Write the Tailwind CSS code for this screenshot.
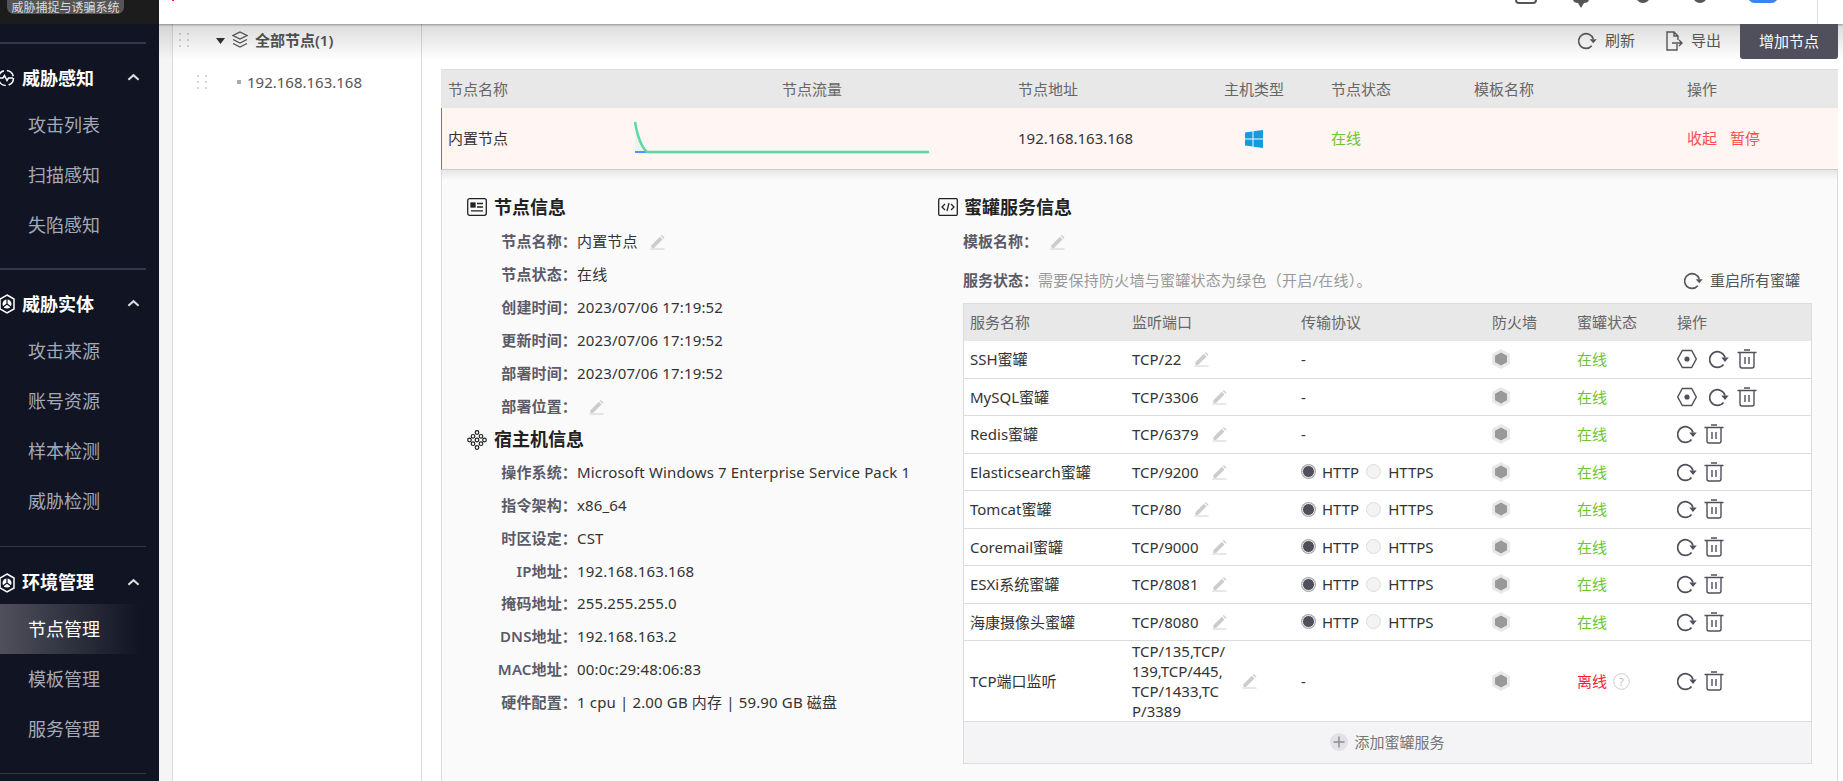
<!doctype html>
<html>
<head>
  <meta charset="UTF-8">
  <script src="https://cdn.jsdelivr.net/npm/@tailwindcss/browser@4"></script>
</head>
<body class="overflow-hidden font-['Noto_Sans','Noto_Sans_CJK_SC',sans-serif] text-[15px] text-[#333]">

<!-- shared icons -->
<svg class="hidden">
  <symbol id="i-refresh" viewBox="0 0 20 20"><path d="M14.5 15.500A7.800 7.800 0 1 1 16 8.500" fill="none" stroke="currentColor" stroke-width="1.700"/><path d="M12.300 8.600h7.400L16 13z" fill="currentColor"/></symbol>
  <symbol id="i-trash" viewBox="0 0 20 20"><path d="M7 1h6M0.5 3.500h19M3 4v13a2 2 0 0 0 2 2h10a2 2 0 0 0 2-2V4M8 8v7M12 8v7" fill="none" stroke="currentColor" stroke-width="1.400"/></symbol>
  <symbol id="i-target" viewBox="0 0 20 20"><path d="M5.300 1.500h9.400L19.300 10l-4.600 8.500H5.300L.7 10z" fill="none" stroke="currentColor" stroke-width="1.500" stroke-linejoin="round"/><circle cx="10" cy="10" r="2.600" fill="currentColor"/></symbol>
  <symbol id="i-pencil" viewBox="0 0 16 16"><path d="M1.500 11.500 10.500 2.500l2.800 2.800-9 9H1.500z" fill="currentColor"/><path d="M11.500 1.500l1-1 3 3-1 1z" fill="currentColor"/><path d="M0.500 15.500h15" stroke="currentColor" stroke-width="1"/></symbol>
  <symbol id="i-hex" viewBox="0 0 18 20"><path d="M9 0l9 5v10l-9 5-9-5V5z" fill="#e8e8e8"/><path d="M9 3.500l6 3.300v6.400l-6 3.300-6-3.300V6.800z" fill="#999"/></symbol>
  <symbol id="i-up" viewBox="0 0 14 9"><path d="M1.500 7 7 2l5.500 5" fill="none" stroke="currentColor" stroke-width="2.200"/></symbol>
  <symbol id="i-dots" viewBox="0 0 10 14"><g fill="#d8d8d8"><rect x="0" y="0" width="2" height="2"/><rect x="8" y="0" width="2" height="2"/><rect x="0" y="6" width="2" height="2"/><rect x="8" y="6" width="2" height="2"/><rect x="0" y="12" width="2" height="2"/><rect x="8" y="12" width="2" height="2"/></g></symbol>
  <symbol id="i-shield" viewBox="0 0 16 20"><path d="M8 1l7 4v10l-7 4-7-4V5z" fill="none" stroke="#fff" stroke-width="1.500"/><circle cx="8" cy="10" r="4.500" fill="#fff"/><path d="M8 10V5M8 10l-4 3M8 10l4 3" stroke="#111423" stroke-width="1.200"/></symbol>
</svg>

<div class="flex h-[781px] w-[1843px]">

  <!-- Sidebar -->
  <aside class="w-[159px] shrink-0 bg-[#111423] overflow-hidden">
    <div class="h-6 bg-[#1c1c1c] pl-[7px]">
      <div class="w-[117px] h-[14px] pt-[2px] rounded-b-[7px] bg-[#555] text-[#ddd] text-[12px] leading-[11px] text-center whitespace-nowrap">威胁捕捉与诱骗系统</div>
    </div>

    <div class="mt-[18px] w-[146px] h-[2px] bg-[#34364a]"></div>
    <div class="mt-3 h-11 flex items-center relative text-white font-bold text-[18px] pl-[22px]">
      <svg class="absolute left-[-1px] top-3 w-4 h-5" viewBox="0 0 16 20"><circle cx="7" cy="10" r="7.500" fill="none" stroke="#fff" stroke-width="1.500" stroke-dasharray="9 3"/><path d="M1 10h3l1.500-2.500L8 12.500 9.500 10H14" fill="none" stroke="#fff" stroke-width="1.500"/></svg>
      威胁感知
      <svg class="absolute left-[127px] top-[17px] w-[13px] h-[9px] text-[#ddd]"><use href="#i-up"/></svg>
    </div>
    <div class="text-[18px] text-[#a4a9b8] pl-[28px] leading-[50px]">
      <div>攻击列表</div>
      <div>扫描感知</div>
      <div>失陷感知</div>
    </div>

    <div class="mt-[18px] w-[146px] h-[2px] bg-[#34364a]"></div>
    <div class="mt-3 h-11 flex items-center relative text-white font-bold text-[18px] pl-[22px]">
      <svg class="absolute left-[-1px] top-3 w-4 h-5"><use href="#i-shield"/></svg>
      威胁实体
      <svg class="absolute left-[127px] top-[17px] w-[13px] h-[9px] text-[#ddd]"><use href="#i-up"/></svg>
    </div>
    <div class="text-[18px] text-[#a4a9b8] pl-[28px] leading-[50px]">
      <div>攻击来源</div>
      <div>账号资源</div>
      <div>样本检测</div>
      <div>威胁检测</div>
    </div>

    <div class="mt-5 w-[146px] h-px bg-[#34364a]"></div>
    <div class="mt-[14px] h-[43px] flex items-center relative text-white font-bold text-[18px] pl-[22px]">
      <svg class="absolute left-[-1px] top-3 w-4 h-5"><use href="#i-shield"/></svg>
      环境管理
      <svg class="absolute left-[127px] top-[17px] w-[13px] h-[9px] text-[#ddd]"><use href="#i-up"/></svg>
    </div>
    <div class="text-[18px] text-[#a4a9b8] leading-[50px]">
      <div class="pl-[28px] text-white bg-linear-to-r from-[#50505c] to-transparent w-[140px]">节点管理</div>
      <div class="pl-[28px]">模板管理</div>
      <div class="pl-[28px]">服务管理</div>
    </div>
    <div class="mt-[19px] w-[146px] h-px bg-[#34364a]"></div>
  </aside>

  <div class="flex-1 flex flex-col relative">
    <!-- Top bar, only its lower edge is in view -->
    <header class="h-6 shrink-0 bg-white relative z-20 shadow-[0_1px_2px_rgba(0,0,0,0.35)] overflow-hidden">
      <div class="absolute left-[13px] top-0 w-[2px] h-px bg-[#f5222d]"></div>
      <div class="absolute left-[1356px] top-[-14px] w-[22px] h-[18px] rounded-[4px] border-2 border-[#555]"></div>
      <svg class="absolute left-[1414px] top-0 w-4 h-2" viewBox="0 0 16 8"><path d="M0 0h16q-1 3-5 3L8 8 5 3Q1 3 0 0z" fill="#555"/></svg>
      <div class="absolute left-[1477px] top-[-6px] w-[14px] h-[9px] bg-[#555] rounded-b-full"></div>
      <div class="absolute left-[1534px] top-[-6px] w-[14px] h-[9px] bg-[#555] rounded-b-full"></div>
      <div class="absolute left-[1589px] top-[-10px] w-[30px] h-[13px] bg-[#3b82f6] rounded-full"></div>
      <div class="absolute left-[1658px] top-0 w-px h-6 bg-[#ddd]"></div>
    </header>
    <div class="absolute left-0 right-0 top-6 h-9 z-10 bg-linear-to-b from-[#00000024] to-transparent pointer-events-none"></div>

    <div class="flex-1 flex min-h-0">
      <div class="w-[13px] shrink-0 bg-[#f5f5f5]"></div>

      <!-- Node tree -->
      <div class="w-[250px] shrink-0 bg-white border-x border-[#dcdcdc] text-[#555]">
        <div class="h-[32px] flex items-center relative">
          <svg class="absolute left-[6px] top-[9px] w-[10px] h-[14px]"><use href="#i-dots"/></svg>
          <svg class="absolute left-[43px] top-[14px] w-[9px] h-[6px]" viewBox="0 0 9 6"><path d="M0 0h9L4.500 6z" fill="#333"/></svg>
          <svg class="absolute left-[59px] top-[7px] w-[16px] h-[18px]" viewBox="0 0 16 18" fill="none" stroke="#555" stroke-width="1.300"><path d="M8 1l7 3.500-7 3.500-7-3.500z"/><path d="M1 8.500l7 3.500 7-3.500"/><path d="M1 12.500l7 3.500 7-3.500"/></svg>
          <span class="ml-[82px] font-semibold">全部节点(1)</span>
        </div>
        <div class="h-[52px] flex items-center relative">
          <svg class="absolute left-[24px] top-[19px] w-[10px] h-[14px]"><use href="#i-dots"/></svg>
          <div class="absolute left-[64px] top-[24px] w-1 h-1 bg-[#aaa]"></div>
          <span class="ml-[74px]">192.168.163.168</span>
        </div>
      </div>

      <!-- Main content -->
      <main class="flex-1 min-w-0 bg-white">
        <div class="h-[45px] flex justify-end items-start pr-[5px] relative z-20">
          <div class="flex items-center h-[33px] mr-[31px] text-[#555] gap-[8px]">
            <svg class="w-[19px] h-[19px] text-[#555]"><use href="#i-refresh"/></svg>刷新
          </div>
          <div class="flex items-center h-[33px] mr-[19px] text-[#555] gap-[8px]">
            <svg class="w-[17px] h-[20px]" viewBox="0 0 17 20" fill="none" stroke="#555" stroke-width="1.400"><path d="M11 13V19H1V1h7l4 4v4M8 1v4h4M6 12h10M13 9l3 3-3 3"/></svg>导出
          </div>
          <button class="w-[98px] h-[35px] rounded-b-[3px] bg-[#50505c] text-white text-[15px]">增加节点</button>
        </div>

        <div class="ml-[19px] w-[1397px]">
          <div class="h-[39px] bg-[#e8e8e8] border-t border-[#dcdcdc] text-[#666] grid grid-cols-[334px_236px_206px_107px_143px_213px_1fr] items-center pl-[7px]">
            <div>节点名称</div><div>节点流量</div><div>节点地址</div><div>主机类型</div><div>节点状态</div><div>模板名称</div><div>操作</div>
          </div>
          <div class="h-[62px] bg-[#fff5f3] border-l border-b border-l-[#e5484d] border-b-[#ccc] grid grid-cols-[334px_236px_206px_107px_143px_213px_1fr] items-center pl-[6px] relative">
            <div>内置节点</div>
            <svg class="absolute left-[192px] top-[13px]" width="298" height="34" viewBox="0 0 298 34"><path d="M1 1Q5 24 13 31L296 31V33H1z" fill="#eef3ee"/><path d="M1 31H13" stroke="#5b8ff9" stroke-width="2"/><path d="M1 1Q5 24 13 31H295" fill="none" stroke="#5ad8a6" stroke-width="2.500"/></svg>
            <div></div>
            <div>192.168.163.168</div>
            <div class="pl-[21px]">
              <svg class="w-[18px] h-[18px]" viewBox="0 0 18 18" fill="#0f9ce0"><path d="M0 2.500 7.500 1.400V8.500H0zM8.500 1.300 18 0V8.500H8.500zM0 9.500H7.500V16.600L0 15.500zM8.500 9.500H18V18L8.500 16.700z"/></svg>
            </div>
            <div class="text-[#6cc62f]">在线</div>
            <div></div>
            <div class="text-[#ff4d4f] flex gap-[13px]"><span>收起</span><span>暂停</span></div>
          </div>
        </div>

        <!-- Expanded detail -->
        <div class="ml-[19px] w-[1397px] h-[612px] bg-[#fafafa] border-x border-[#dcdcdc] flex pl-[25px] pt-[25px] relative">
          <div class="absolute left-0 right-0 top-0 h-[10px] bg-linear-to-b from-[#00000014] to-transparent"></div>

          <div class="w-[471px] shrink-0">
            <div class="h-6 flex items-center gap-[7px] text-[18px] font-bold text-[#222]">
              <svg class="w-5 h-[18px]" viewBox="0 0 20 18" fill="none" stroke="#222" stroke-width="1.300"><rect x=".7" y=".7" width="18.600" height="16.600" rx="2"/><rect x="4" y="5" width="4" height="4" fill="#222"/><path d="M10 5.500h6M10 9h6M4 12.800h12"/></svg>
              节点信息
            </div>
            <div class="mt-[6px] tracking-[0.15px] [&>div]:h-[33px] [&>div]:flex [&>div]:items-center">
              <div><span class="w-[110px] text-right font-semibold text-[#5a5a68]">节点名称：</span>内置节点<svg class="ml-[12px] w-[15px] h-[16px] text-[#ccc]"><use href="#i-pencil"/></svg></div>
              <div><span class="w-[110px] text-right font-semibold text-[#5a5a68]">节点状态：</span>在线</div>
              <div><span class="w-[110px] text-right font-semibold text-[#5a5a68]">创建时间：</span>2023/07/06 17:19:52</div>
              <div><span class="w-[110px] text-right font-semibold text-[#5a5a68]">更新时间：</span>2023/07/06 17:19:52</div>
              <div><span class="w-[110px] text-right font-semibold text-[#5a5a68]">部署时间：</span>2023/07/06 17:19:52</div>
              <div><span class="w-[110px] text-right font-semibold text-[#5a5a68]">部署位置：</span><svg class="ml-[12px] w-[15px] h-[16px] text-[#ccc]"><use href="#i-pencil"/></svg></div>
            </div>
            <div class="mt-[4.500px] h-6 flex items-center gap-[7px] text-[18px] font-bold text-[#222]">
              <svg class="w-5 h-5" viewBox="0 0 20 20" fill="none" stroke="#222" stroke-width="1.200"><circle cx="10" cy="2.500" r="1.800"/><circle cx="6" cy="6.300" r="1.800"/><circle cx="14" cy="6.300" r="1.800"/><circle cx="2.500" cy="10" r="1.800"/><circle cx="10" cy="10" r="1.800"/><circle cx="17.500" cy="10" r="1.800"/><circle cx="6" cy="13.700" r="1.800"/><circle cx="14" cy="13.700" r="1.800"/><circle cx="10" cy="17.500" r="1.800"/></svg>
              宿主机信息
            </div>
            <div class="mt-[4.500px] tracking-[0.15px] [&>div]:h-[32.8px] [&>div]:flex [&>div]:items-center">
              <div><span class="w-[110px] text-right font-semibold text-[#5a5a68]">操作系统：</span>Microsoft Windows 7 Enterprise Service Pack 1</div>
              <div><span class="w-[110px] text-right font-semibold text-[#5a5a68]">指令架构：</span>x86_64</div>
              <div><span class="w-[110px] text-right font-semibold text-[#5a5a68]">时区设定：</span>CST</div>
              <div><span class="w-[110px] text-right font-semibold text-[#5a5a68]">IP地址：</span>192.168.163.168</div>
              <div><span class="w-[110px] text-right font-semibold text-[#5a5a68]">掩码地址：</span>255.255.255.0</div>
              <div><span class="w-[110px] text-right font-semibold text-[#5a5a68]">DNS地址：</span>192.168.163.2</div>
              <div><span class="w-[110px] text-right font-semibold text-[#5a5a68]">MAC地址：</span>00:0c:29:48:06:83</div>
              <div><span class="w-[110px] text-right font-semibold text-[#5a5a68]">硬件配置：</span>1 cpu | 2.00 GB 内存 | 59.90 GB 磁盘</div>
            </div>
          </div>

          <div class="w-[874px] shrink-0">
            <div class="h-6 flex items-center gap-[6px] text-[18px] font-bold text-[#222]">
              <svg class="w-5 h-[18px]" viewBox="0 0 20 18" fill="none" stroke="#222" stroke-width="1.300"><rect x=".7" y=".7" width="18.600" height="16.600" rx="1"/><path d="M7 6 4 9l3 3M13 6l3 3-3 3M11 5 9 13"/></svg>
              蜜罐服务信息
            </div>
            <div class="pl-[25px]">
              <div class="h-[33px] mt-[6px] flex items-center">
                <span class="font-semibold text-[#5a5a68]">模板名称：</span>
                <svg class="ml-[12px] w-[15px] h-[16px] text-[#ccc]"><use href="#i-pencil"/></svg>
              </div>
              <div class="h-[45px] flex items-center">
                <span class="font-semibold text-[#5a5a68]">服务状态：</span>
                <span class="text-[#999] tracking-[0.25px]">需要保持防火墙与蜜罐状态为绿色（开启/在线）。</span>
                <span class="ml-auto mr-[12px] flex items-center gap-[7px] text-[#555]"><svg class="w-[19px] h-[19px]"><use href="#i-refresh"/></svg>重启所有蜜罐</span>
              </div>

              <div class="w-[849px] border border-[#dcdcdc]">
                <div class="h-[37px] bg-[#e8e8e8] text-[#666] grid grid-cols-[162px_169px_191px_85px_100px_1fr] items-center pl-[6px]">
                  <div>服务名称</div><div>监听端口</div><div>传输协议</div><div>防火墙</div><div>蜜罐状态</div><div>操作</div>
                </div>

                <div class="h-[37.5px] bg-white border-b border-[#dcdcdc] grid grid-cols-[162px_169px_191px_85px_100px_1fr] items-center pl-[6px]">
                  <div>SSH蜜罐</div>
                  <div class="flex items-center gap-[13px]">TCP/22<svg class="w-[15px] h-[16px] text-[#ccc]"><use href="#i-pencil"/></svg></div>
                  <div>-</div>
                  <svg class="w-[18px] h-5"><use href="#i-hex"/></svg>
                  <div class="text-[#6cc62f]">在线</div>
                  <div class="flex items-center text-[#50505c]"><svg class="w-5 h-5"><use href="#i-target"/></svg><svg class="ml-[12px] w-5 h-5"><use href="#i-refresh"/></svg><svg class="ml-[8px] w-5 h-5"><use href="#i-trash"/></svg></div>
                </div>
                <div class="h-[37.5px] bg-white border-b border-[#dcdcdc] grid grid-cols-[162px_169px_191px_85px_100px_1fr] items-center pl-[6px]">
                  <div>MySQL蜜罐</div>
                  <div class="flex items-center gap-[13px]">TCP/3306<svg class="w-[15px] h-[16px] text-[#ccc]"><use href="#i-pencil"/></svg></div>
                  <div>-</div>
                  <svg class="w-[18px] h-5"><use href="#i-hex"/></svg>
                  <div class="text-[#6cc62f]">在线</div>
                  <div class="flex items-center text-[#50505c]"><svg class="w-5 h-5"><use href="#i-target"/></svg><svg class="ml-[12px] w-5 h-5"><use href="#i-refresh"/></svg><svg class="ml-[8px] w-5 h-5"><use href="#i-trash"/></svg></div>
                </div>
                <div class="h-[37.5px] bg-white border-b border-[#dcdcdc] grid grid-cols-[162px_169px_191px_85px_100px_1fr] items-center pl-[6px]">
                  <div>Redis蜜罐</div>
                  <div class="flex items-center gap-[13px]">TCP/6379<svg class="w-[15px] h-[16px] text-[#ccc]"><use href="#i-pencil"/></svg></div>
                  <div>-</div>
                  <svg class="w-[18px] h-5"><use href="#i-hex"/></svg>
                  <div class="text-[#6cc62f]">在线</div>
                  <div class="flex items-center text-[#50505c]"><svg class="w-5 h-5"><use href="#i-refresh"/></svg><svg class="ml-[7px] w-5 h-5"><use href="#i-trash"/></svg></div>
                </div>
                <div class="h-[37.5px] bg-white border-b border-[#dcdcdc] grid grid-cols-[162px_169px_191px_85px_100px_1fr] items-center pl-[6px]">
                  <div>Elasticsearch蜜罐</div>
                  <div class="flex items-center gap-[13px]">TCP/9200<svg class="w-[15px] h-[16px] text-[#ccc]"><use href="#i-pencil"/></svg></div>
                  <div class="flex items-center"><span class="w-[13px] h-[13px] ml-px rounded-full border-[1.500px] border-[#eee] bg-[#50505c] ring-1 ring-[#aaa]"></span><span class="ml-[7px]">HTTP</span><span class="ml-[7px] w-[15px] h-[15px] rounded-full border border-[#ddd] bg-[#f3f3f3]"></span><span class="ml-[7px]">HTTPS</span></div>
                  <svg class="w-[18px] h-5"><use href="#i-hex"/></svg>
                  <div class="text-[#6cc62f]">在线</div>
                  <div class="flex items-center text-[#50505c]"><svg class="w-5 h-5"><use href="#i-refresh"/></svg><svg class="ml-[7px] w-5 h-5"><use href="#i-trash"/></svg></div>
                </div>
                <div class="h-[37.5px] bg-white border-b border-[#dcdcdc] grid grid-cols-[162px_169px_191px_85px_100px_1fr] items-center pl-[6px]">
                  <div>Tomcat蜜罐</div>
                  <div class="flex items-center gap-[13px]">TCP/80<svg class="w-[15px] h-[16px] text-[#ccc]"><use href="#i-pencil"/></svg></div>
                  <div class="flex items-center"><span class="w-[13px] h-[13px] ml-px rounded-full border-[1.500px] border-[#eee] bg-[#50505c] ring-1 ring-[#aaa]"></span><span class="ml-[7px]">HTTP</span><span class="ml-[7px] w-[15px] h-[15px] rounded-full border border-[#ddd] bg-[#f3f3f3]"></span><span class="ml-[7px]">HTTPS</span></div>
                  <svg class="w-[18px] h-5"><use href="#i-hex"/></svg>
                  <div class="text-[#6cc62f]">在线</div>
                  <div class="flex items-center text-[#50505c]"><svg class="w-5 h-5"><use href="#i-refresh"/></svg><svg class="ml-[7px] w-5 h-5"><use href="#i-trash"/></svg></div>
                </div>
                <div class="h-[37.5px] bg-white border-b border-[#dcdcdc] grid grid-cols-[162px_169px_191px_85px_100px_1fr] items-center pl-[6px]">
                  <div>Coremail蜜罐</div>
                  <div class="flex items-center gap-[13px]">TCP/9000<svg class="w-[15px] h-[16px] text-[#ccc]"><use href="#i-pencil"/></svg></div>
                  <div class="flex items-center"><span class="w-[13px] h-[13px] ml-px rounded-full border-[1.500px] border-[#eee] bg-[#50505c] ring-1 ring-[#aaa]"></span><span class="ml-[7px]">HTTP</span><span class="ml-[7px] w-[15px] h-[15px] rounded-full border border-[#ddd] bg-[#f3f3f3]"></span><span class="ml-[7px]">HTTPS</span></div>
                  <svg class="w-[18px] h-5"><use href="#i-hex"/></svg>
                  <div class="text-[#6cc62f]">在线</div>
                  <div class="flex items-center text-[#50505c]"><svg class="w-5 h-5"><use href="#i-refresh"/></svg><svg class="ml-[7px] w-5 h-5"><use href="#i-trash"/></svg></div>
                </div>
                <div class="h-[37.5px] bg-white border-b border-[#dcdcdc] grid grid-cols-[162px_169px_191px_85px_100px_1fr] items-center pl-[6px]">
                  <div>ESXi系统蜜罐</div>
                  <div class="flex items-center gap-[13px]">TCP/8081<svg class="w-[15px] h-[16px] text-[#ccc]"><use href="#i-pencil"/></svg></div>
                  <div class="flex items-center"><span class="w-[13px] h-[13px] ml-px rounded-full border-[1.500px] border-[#eee] bg-[#50505c] ring-1 ring-[#aaa]"></span><span class="ml-[7px]">HTTP</span><span class="ml-[7px] w-[15px] h-[15px] rounded-full border border-[#ddd] bg-[#f3f3f3]"></span><span class="ml-[7px]">HTTPS</span></div>
                  <svg class="w-[18px] h-5"><use href="#i-hex"/></svg>
                  <div class="text-[#6cc62f]">在线</div>
                  <div class="flex items-center text-[#50505c]"><svg class="w-5 h-5"><use href="#i-refresh"/></svg><svg class="ml-[7px] w-5 h-5"><use href="#i-trash"/></svg></div>
                </div>
                <div class="h-[37.5px] bg-white border-b border-[#dcdcdc] grid grid-cols-[162px_169px_191px_85px_100px_1fr] items-center pl-[6px]">
                  <div>海康摄像头蜜罐</div>
                  <div class="flex items-center gap-[13px]">TCP/8080<svg class="w-[15px] h-[16px] text-[#ccc]"><use href="#i-pencil"/></svg></div>
                  <div class="flex items-center"><span class="w-[13px] h-[13px] ml-px rounded-full border-[1.500px] border-[#eee] bg-[#50505c] ring-1 ring-[#aaa]"></span><span class="ml-[7px]">HTTP</span><span class="ml-[7px] w-[15px] h-[15px] rounded-full border border-[#ddd] bg-[#f3f3f3]"></span><span class="ml-[7px]">HTTPS</span></div>
                  <svg class="w-[18px] h-5"><use href="#i-hex"/></svg>
                  <div class="text-[#6cc62f]">在线</div>
                  <div class="flex items-center text-[#50505c]"><svg class="w-5 h-5"><use href="#i-refresh"/></svg><svg class="ml-[7px] w-5 h-5"><use href="#i-trash"/></svg></div>
                </div>
                <div class="h-[80.5px] bg-white border-b border-[#dcdcdc] grid grid-cols-[162px_169px_191px_85px_100px_1fr] items-center pl-[6px]">
                  <div>TCP端口监听</div>
                  <div class="flex items-center gap-[13px]"><span class="w-[97px] break-all leading-[20px]">TCP/135,TCP/139,TCP/445,TCP/1433,TCP/3389</span><svg class="w-[15px] h-[16px] text-[#ccc]"><use href="#i-pencil"/></svg></div>
                  <div>-</div>
                  <svg class="w-[18px] h-5"><use href="#i-hex"/></svg>
                  <div class="flex items-center gap-[6px] text-[#f5222d]">离线<svg class="w-[17px] h-[17px]" viewBox="0 0 17 17"><circle cx="8.500" cy="8.500" r="7.800" fill="none" stroke="#ccc"/><text x="8.500" y="12.500" text-anchor="middle" font-size="11" fill="#bbb">?</text></svg></div>
                  <div class="flex items-center text-[#50505c]"><svg class="w-5 h-5"><use href="#i-refresh"/></svg><svg class="ml-[7px] w-5 h-5"><use href="#i-trash"/></svg></div>
                </div>
                <div class="h-[41px] bg-[#f4f4f6] flex items-center justify-center gap-[6px] text-[#777]">
                  <svg class="w-[18px] h-[18px]" viewBox="0 0 18 18"><circle cx="9" cy="9" r="9" fill="#e2e2e6"/><path d="M9 3.500v11M3.500 9h11" stroke="#8a8a94" stroke-width="1.400"/></svg>
                  添加蜜罐服务
                </div>
              </div>
            </div>
          </div>
        </div>
      </main>
    </div>
  </div>
</div>
</body>
</html>
